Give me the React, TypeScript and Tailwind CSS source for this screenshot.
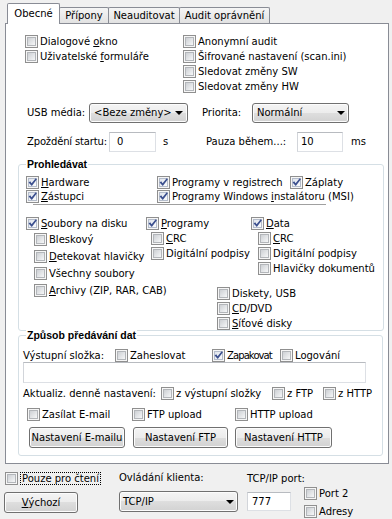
import React from "react";

function Cb({ checked = false }: { checked?: boolean }) {
  return (
    <span className="relative flex h-[13px] w-[13px] shrink-0 items-center justify-center border border-[#8f8f8f] bg-[#f6f6f6]">
      <span
        className={
          checked
            ? "h-[9px] w-[9px] border border-[#b4bccb] bg-linear-to-br from-[#dfe4ec] to-[#fbfcfd]"
            : "h-[9px] w-[9px] border border-[#b3b6ba] bg-linear-to-br from-[#cdd0d4] to-[#f6f7f8]"
        }
      />
      {checked && (
        <svg className="absolute left-0 top-0" width="11" height="11" viewBox="0 0 11 11">
          <path d="M1.6 5.4 L3.2 4.2 L4.6 6.2 L8.7 1.2 L9.9 2.3 L4.8 9 Z" fill="#3b4f8e" />
        </svg>
      )}
    </span>
  );
}

function CL({
  checked = false,
  children,
  className = "",
}: {
  checked?: boolean;
  children: React.ReactNode;
  className?: string;
}) {
  return (
    <div className={`flex h-[13px] shrink-0 items-center gap-[2px] whitespace-nowrap ${className}`}>
      <Cb checked={checked} />
      <span className="leading-[12px]">{children}</span>
    </div>
  );
}

const btnBg =
  "rounded-[3px] border border-[#707070] bg-[linear-gradient(to_bottom,#f4f4f4_0%,#ececec_50%,#dedede_50%,#d2d2d2_100%)] shadow-[inset_0_0_0_1px_#fcfcfc]";

function Btn({ children, className = "" }: { children: React.ReactNode; className?: string }) {
  return (
    <div className={`flex shrink-0 items-center justify-center whitespace-nowrap ${btnBg} ${className}`}>
      {children}
    </div>
  );
}

function Sel({ value, className = "" }: { value: string; className?: string }) {
  return (
    <div className={`flex shrink-0 items-center justify-between whitespace-nowrap ${btnBg} ${className}`}>
      <span>{value}</span>
      <svg width="8" height="4" viewBox="0 0 8 4">
        <path d="M0 0 H8 L4 4 Z" fill="#000" />
      </svg>
    </div>
  );
}

function Inp({ value, className = "" }: { value: string; className?: string }) {
  return (
    <div
      className={`flex shrink-0 items-center border border-[#dde0e5] border-t-[#b8bbc0] border-l-[#d2d5da] bg-white ${className}`}
    >
      {value}
    </div>
  );
}

const legend = "font-['Liberation_Sans',sans-serif] text-[10.5px] font-bold leading-[12px]";

export default function App() {
  return (
    <div className="relative h-[519px] w-[392px] overflow-hidden bg-[#f0f0f0] font-['DejaVu_Sans',sans-serif] text-[10px] leading-[12px] text-black">
      {/* Tabs */}
      <div className="flex h-[23px] items-end pl-[7px]">
        <div className="relative z-10 mb-[-1px] flex h-[21px] w-[53px] items-center justify-center rounded-t-[2px] border border-b-0 border-[#898c95] bg-white">
          Obecné
        </div>
        <div className="-ml-[1px] flex h-[16px] w-[50px] items-center justify-center rounded-t-[2px] border border-b-0 border-[#898c95] bg-linear-to-b from-[#f5f5f5] to-[#e2e2e2] pt-[1px]">
          Přípony
        </div>
        <div className="-ml-[1px] flex h-[16px] w-[72px] items-center justify-center rounded-t-[2px] border border-b-0 border-[#898c95] bg-linear-to-b from-[#f5f5f5] to-[#e2e2e2] pt-[1px]">
          Neauditovat
        </div>
        <div className="-ml-[1px] flex h-[16px] w-[91px] items-center justify-center rounded-t-[2px] border border-b-0 border-[#898c95] bg-linear-to-b from-[#f5f5f5] to-[#e2e2e2] pt-[1px]">
          Audit oprávnění
        </div>
      </div>

      {/* Panel */}
      <div className="ml-[5px] h-[441px] w-[384px] border border-[#898c95] bg-white">
        {/* Top checkboxes */}
        <div className="flex pl-[19px] pt-[11px]">
          <div className="flex w-[158px] flex-col gap-[2px]">
            <CL>
              Dialogové <u>o</u>kno
            </CL>
            <CL>
              Uživatelské <u>f</u>ormuláře
            </CL>
          </div>
          <div className="flex flex-col gap-[2px]">
            <CL>Anonymní audit</CL>
            <CL>Šifrované nastavení (scan.ini)</CL>
            <CL>Sledovat změny SW</CL>
            <CL>Sledovat změny HW</CL>
          </div>
        </div>

        {/* USB / Priorita */}
        <div className="mt-[10px] flex h-[20px] items-center whitespace-nowrap pl-[21px]">
          <span className="w-[62px] shrink-0">USB média:</span>
          <Sel value="<Beze změny>" className="h-[20px] w-[99px] pl-[4px] pr-[4px]" />
          <span className="ml-[14px] w-[50px] shrink-0">Priorita:</span>
          <Sel value="Normální" className="h-[20px] w-[97px] pl-[4px] pr-[3px]" />
        </div>

        {/* Zpoždění / Pauza */}
        <div className="mt-[9px] flex h-[20px] items-center whitespace-nowrap pl-[21px]">
          <span className="w-[82px] shrink-0 tracking-[-0.15px]">Zpoždění startu:</span>
          <Inp value="0" className="h-[20px] w-[47px] pl-[7px]" />
          <span className="ml-[7px] w-[43px] shrink-0">s</span>
          <span className="w-[91px] shrink-0">Pauza během...:</span>
          <Inp value="10" className="h-[20px] w-[46px] pl-[3px]" />
          <span className="ml-[8px]">ms</span>
        </div>

        {/* Prohledávat */}
        <fieldset className="ml-[12px] mt-[6px] w-[366px] min-w-0 rounded-[3px] border border-[#d5dfe5] pl-[7px] pt-[6px]">
          <legend className={`px-[1px] ${legend}`}>Prohledávat</legend>
          <div className="flex">
            <CL checked className="w-[131px]">
              <u>H</u>ardware
            </CL>
            <CL checked className="w-[133px]">
              Programy v registrech
            </CL>
            <CL checked>Záplaty</CL>
          </div>
          <div className="mt-[1px] flex">
            <CL checked className="w-[131px]">
              <u>Z</u>ástupci
            </CL>
            <CL checked>
              Programy Windows <u>i</u>nstalátoru (MSI)
            </CL>
          </div>
          <div className="ml-[7px] mt-[1px] h-[2px] w-[293px] border-b border-t border-b-white border-t-[#a0a0a0]" />
          <div className="mt-[11px] flex">
            <CL checked className="w-[120px]">
              <u>S</u>oubory na disku
            </CL>
            <CL checked className="w-[105px]">
              <u>P</u>rogramy
            </CL>
            <CL checked>
              <u>D</u>ata
            </CL>
          </div>
          <div className="flex">
            <div className="ml-[8px] mt-[3px] flex w-[117px] shrink-0 flex-col gap-[4px]">
              <CL>Bleskový</CL>
              <CL>
                <u>D</u>etekovat hlavičky
              </CL>
              <CL>Všechny soubory</CL>
              <CL>
                <u>A</u>rchivy (ZIP, RAR, CAB)
              </CL>
            </div>
            <div className="mt-[2px] flex flex-col">
              <div className="flex">
                <div className="flex w-[107px] shrink-0 flex-col gap-[2px]">
                  <CL>
                    <u>C</u>RC
                  </CL>
                  <CL>Digitální podpisy</CL>
                </div>
                <div className="flex flex-col gap-[2px]">
                  <CL>
                    <u>C</u>RC
                  </CL>
                  <CL>Digitální podpisy</CL>
                  <CL>Hlavičky dokumentů</CL>
                </div>
              </div>
              <div className="ml-[66px] mt-[12px] flex flex-col gap-[2px]">
                <CL>Diskety, USB</CL>
                <CL>
                  <u>C</u>D/DVD
                </CL>
                <CL>
                  <u>S</u>íťové disky
                </CL>
              </div>
            </div>
          </div>
        </fieldset>

        {/* Způsob předávání dat */}
        <fieldset className="-mt-[2px] ml-[12px] w-[365px] min-w-0 rounded-[3px] border border-[#d5dfe5] pb-[7px] pl-[4px] pt-[8px]">
          <legend className={`ml-[3px] bg-white px-[1px] ${legend}`}>Způsob předávání dat</legend>
          <div className="flex h-[13px] items-center">
            <span className="w-[92px] shrink-0 whitespace-nowrap">Výstupní složka:</span>
            <CL className="w-[97px]">Zaheslovat</CL>
            <CL checked className="w-[68px] tracking-[-0.9px]">
              Zapakovat
            </CL>
            <CL>Logování</CL>
          </div>
          <Inp value="" className="h-[21px] w-[343px]" />
          <div className="mt-[4px] flex h-[13px] items-center">
            <span className="w-[138px] shrink-0 whitespace-nowrap">Aktualiz. denně nastavení:</span>
            <CL className="w-[111px]">z výstupní složky</CL>
            <CL className="w-[51px]">z FTP</CL>
            <CL>z HTTP</CL>
          </div>
          <div className="ml-[4px] mt-[8px] flex">
            <CL className="w-[105px]">Zasílat E-mail</CL>
            <CL className="w-[103px]">FTP upload</CL>
            <CL>HTTP upload</CL>
          </div>
          <div className="ml-[6px] mt-[6px] flex">
            <Btn className="h-[21px] w-[96px]">Nastavení E-mailu</Btn>
            <Btn className="ml-[8px] h-[21px] w-[95px]">Nastavení FTP</Btn>
            <Btn className="ml-[7px] h-[21px] w-[97px]">Nastavení HTTP</Btn>
          </div>
        </fieldset>
      </div>

      {/* Bottom area */}
      <div className="flex">
        <div className="ml-[4px] flex w-[115px] shrink-0 flex-col pt-[8px]">
          <div className="ml-[1px] flex h-[13px] items-center">
            <Cb />
            <span className="ml-[2px] whitespace-nowrap border border-dotted border-black px-[1px] leading-[11px]">
              Pouze pro čtení
            </span>
          </div>
          <Btn className="mt-[7px] h-[21px] w-[74px]">
            <u>V</u>ýchozí
          </Btn>
        </div>
        <div className="flex w-[128px] shrink-0 flex-col pt-[8px]">
          <span className="whitespace-nowrap">Ovládání klienta:</span>
          <Sel value="TCP/IP" className="mt-[7px] h-[21px] w-[119px] pl-[3px] pr-[3px]" />
        </div>
        <div className="flex w-[57px] shrink-0 flex-col pt-[9px]">
          <span className="whitespace-nowrap">TCP/IP port:</span>
          <Inp value="777" className="mt-[7px] h-[19px] w-[44px] pl-[4px]" />
        </div>
        <div className="flex flex-col gap-[5px] pt-[23px]">
          <CL>Port 2</CL>
          <CL>Adresy</CL>
        </div>
      </div>
    </div>
  );
}
